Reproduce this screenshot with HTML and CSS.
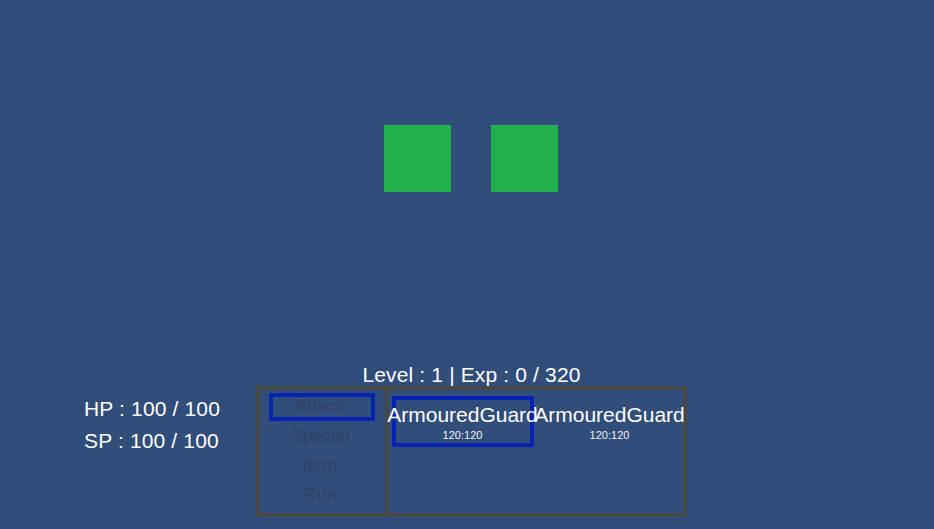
FILE: index.html
```html
<!DOCTYPE html>
<html lang="en">
<head>
<meta charset="utf-8">
<title>Battle</title>
<link rel="stylesheet" href="styles.css">
</head>
<body>
<div class="scene">
  <div class="sprites">
    <div class="sprite"></div>
    <div class="sprite"></div>
  </div>
  <div class="hud">
    <div class="stats">
      <div class="stat">HP : 100 / 100</div>
      <div class="stat">SP : 100 / 100</div>
    </div>
    <div class="battle">
      <div class="level">Level : 1 | Exp : 0 / 320</div>
      <div class="panel">
        <div class="menu">
          <div class="menu-item selected">Attack</div>
          <div class="menu-item">Special</div>
          <div class="menu-item">Item</div>
          <div class="menu-item">Run</div>
        </div>
        <div class="targets">
          <div class="target selected">
            <div class="target-name">ArmouredGuard</div>
            <div class="target-hp">120:120</div>
          </div>
          <div class="target">
            <div class="target-name">ArmouredGuard</div>
            <div class="target-hp">120:120</div>
          </div>
        </div>
      </div>
    </div>
  </div>
</div>
</body>
</html>
```

FILE: styles.css
```css
html, body {
  margin: 0;
  padding: 0;
  background: #314d79;
}

body {
  width: 934px;
  height: 529px;
  overflow: hidden;
  font-family: "Liberation Sans", Arial, sans-serif;
  color: #ffffff;
}

.scene {
  display: flex;
  flex-direction: column;
  height: 529px;
}

.sprites {
  display: flex;
  justify-content: center;
  gap: 40px;
  margin-top: 125px;
  padding-left: 8px;
}

.sprite {
  width: 67px;
  height: 67px;
  background: #22b14c;
}

.hud {
  display: flex;
  align-items: flex-start;
  margin-top: 170px;
  padding-left: 84px;
}

.stats {
  width: 172px;
  padding-top: 31px;
}

.stat {
  font-size: 21px;
  line-height: 32px;
  letter-spacing: 0.15px;
  white-space: nowrap;
}

.battle {
  display: flex;
  flex-direction: column;
  width: 431px;
}

.level {
  font-size: 21px;
  line-height: 23px;
  padding-top: 1px;
  letter-spacing: 0.15px;
  text-align: center;
  white-space: nowrap;
}

.panel {
  box-sizing: border-box;
  width: 431px;
  height: 131px;
  border: 4px solid #474747;
  display: flex;
}

.menu {
  width: 120px;
  padding: 2px 5px 0 0;
  border-right: 4px solid #474747;
  display: flex;
  flex-direction: column;
}

.menu-item {
  position: relative;
  height: 29.5px;
  line-height: 29.5px;
  font-size: 18px;
  text-align: center;
  color: #2f4365;
}

.menu-item.selected::after {
  content: "";
  position: absolute;
  top: 1px;
  bottom: 1px;
  left: 9px;
  right: 5px;
  border: 4px solid #0622b2;
}

.targets {
  flex: 1;
  display: grid;
  grid-template-columns: 147px 147px;
  align-items: start;
}

.target {
  position: relative;
  padding-top: 13px;
  text-align: center;
}

.target.selected::before {
  content: "";
  position: absolute;
  top: 6px;
  left: 3px;
  width: 142px;
  height: 51px;
  box-sizing: border-box;
  border: 4px solid #0622b2;
}

.target-name {
  position: relative;
  font-size: 21px;
  line-height: 24px;
  white-space: nowrap;
  margin: 0 -10px;
}

.target-hp {
  position: relative;
  margin-top: 2px;
  font-size: 11px;
  line-height: 13px;
  color: #f2f2f2;
}
```
